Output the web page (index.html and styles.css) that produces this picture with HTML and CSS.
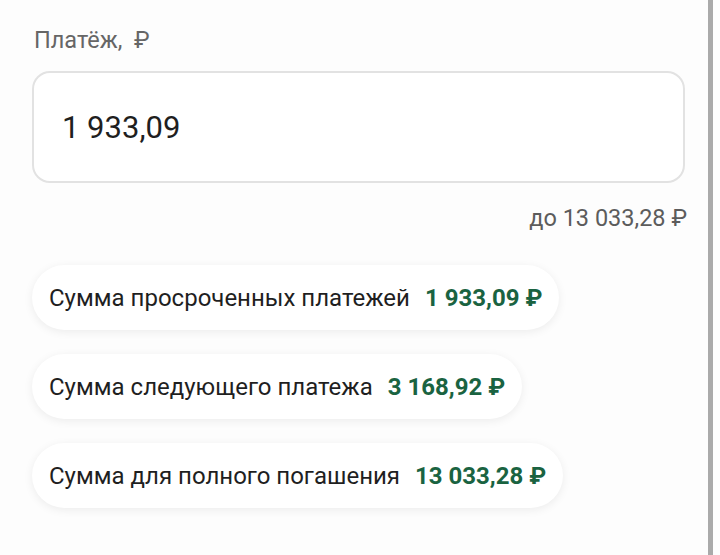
FILE: index.html
```html
<!DOCTYPE html>
<html lang="ru">
<head>
    <meta charset="UTF-8">
    <meta name="viewport" content="width=device-width, initial-scale=1.0">
    <title>Платёж</title>
    <link rel="stylesheet" href="styles.css">
</head>
<body>
    <div class="screen">
        <div class="payment">
            <div class="field-label">Платёж,&nbsp; ₽</div>
            <div class="amount-field">
                <input type="text" id="amount-input" class="amount-input" value="1 933,09">
            </div>
            <div class="limit">до 13 033,28 ₽</div>

            <div class="chips">
                <button class="chip" onclick="setAmount('1 933,09')">
                    <span class="chip-title">Сумма просроченных платежей</span>
                    <span class="chip-sum">1 933,09 ₽</span>
                </button>
                <button class="chip" onclick="setAmount('3 168,92')">
                    <span class="chip-title">Сумма следующего платежа</span>
                    <span class="chip-sum">3 168,92 ₽</span>
                </button>
                <button class="chip" onclick="setAmount('13 033,28')">
                    <span class="chip-title">Сумма для полного погашения</span>
                    <span class="chip-sum">13 033,28 ₽</span>
                </button>
            </div>
        </div>
        <div class="scroll-edge"></div>
    </div>

    <script>
        function setAmount(value) {
            document.getElementById('amount-input').value = value;
        }
    </script>
</body>
</html>
```

FILE: styles.css
```css
body {
    font-family: Roboto, "Noto Sans", Arial, sans-serif;
    background-color: #fdfdfd;
    margin: 0;
    padding: 0;
    color: #1f1f1f;
}
.screen {
    position: relative;
    height: 555px;
}
.payment {
    width: 708px;
    box-sizing: border-box;
    padding: 26px 23px 0 32px;
}
.field-label {
    font-size: 23.5px;
    line-height: 28px;
    color: #666666;
    padding-left: 2px;
}
.amount-field {
    margin-top: 17px;
    height: 112px;
    box-sizing: border-box;
    border: 2px solid #e2e2e2;
    border-radius: 18px;
    background-color: #ffffff;
    display: flex;
    align-items: center;
    padding: 0 28px;
}
.amount-input {
    border: none;
    outline: none;
    background: transparent;
    font-family: inherit;
    font-size: 31px;
    color: #1f1f1f;
    width: 100%;
    padding: 0;
}
.limit {
    margin-top: 21px;
    margin-right: -2px;
    text-align: right;
    font-size: 23.5px;
    line-height: 28px;
    color: #5c5c5c;
}
.chips {
    margin-top: 33px;
    display: flex;
    flex-direction: column;
    align-items: flex-start;
    gap: 24px;
}
.chip {
    display: flex;
    align-items: center;
    gap: 15px;
    height: 65px;
    padding: 0 17px;
    border: none;
    border-radius: 33px;
    background-color: #ffffff;
    box-shadow: 0 2px 10px rgba(0, 0, 0, 0.07);
    font-family: inherit;
    font-size: 24px;
    color: #1f1f1f;
    cursor: pointer;
}
.chip-sum {
    color: #1a6341;
    font-weight: 700;
}
/* полоса прокрутки поверх правого края */
.scroll-edge {
    position: absolute;
    top: 0;
    bottom: 0;
    left: 708px;
    width: 5px;
    background-color: #aaaaaa;
}
```
